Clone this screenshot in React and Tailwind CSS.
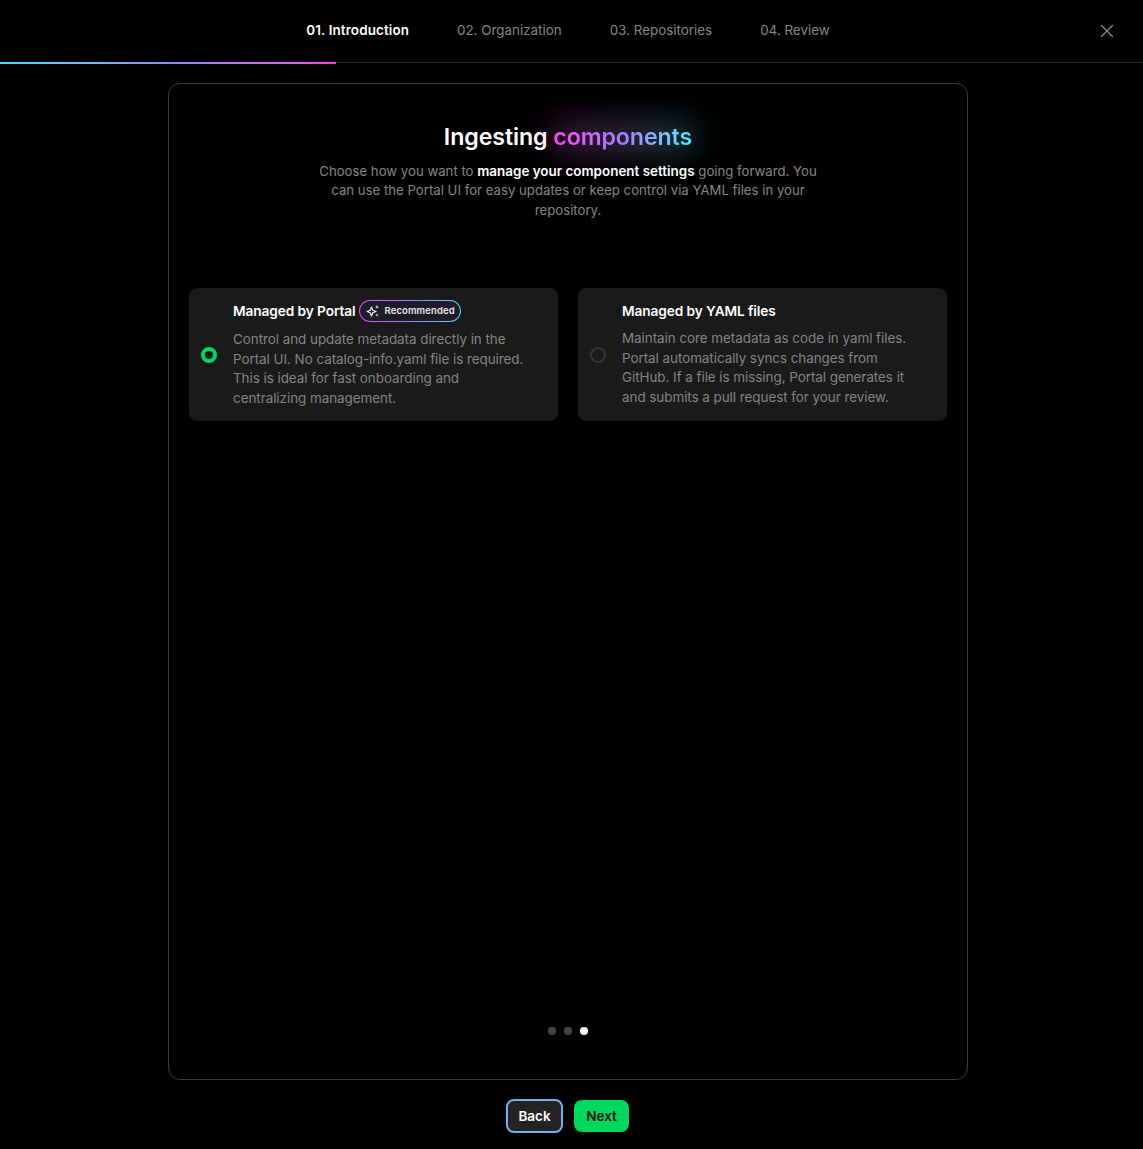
import { X } from 'lucide-react';

const FONT = "font-['Inter',sans-serif]";

const STEPS = ['01. Introduction', '02. Organization', '03. Repositories', '04. Review'];

function SparkIcon() {
  return (
    <svg width="14" height="14" viewBox="0 0 14 14" className="shrink-0">
      <path d="M5.5 3 L6.7 6.3 L10 7.5 L6.7 8.7 L5.5 12 L4.3 8.7 L1 7.5 L4.3 6.3 Z" fill="none" stroke="#f0f0f0" strokeWidth="1.2" strokeLinejoin="round" />
      <path d="M11 1 L11.6 2.4 L13 3 L11.6 3.6 L11 5 L10.4 3.6 L9 3 L10.4 2.4 Z" fill="#f0f0f0" />
      <path d="M11 9.5 L11.5 10.5 L12.5 11 L11.5 11.5 L11 12.5 L10.5 11.5 L9.5 11 L10.5 10.5 Z" fill="#f0f0f0" />
    </svg>
  );
}

function Radio({ checked }) {
  if (checked) return <span className="block w-4 h-4 mt-px shrink-0 rounded-full border-[4px] border-[#00d75f]" />;
  return <span className="block w-4 h-4 mt-px shrink-0 rounded-full border-2 border-[#333333]" />;
}

function OptionCard({ checked, title, badge, lines }) {
  return (
    <div className="flex-1 h-[133px] bg-[#1a1a1a] rounded-lg flex items-center pl-3 pr-3">
      <Radio checked={checked} />
      <div className="ml-4 pb-px">
        <div className="flex items-center text-[13.7px] leading-5 font-semibold text-white tracking-[-0.1px]">
          {title}
          {badge && (
            <span className="ml-[3px] h-[22px] rounded-full p-px bg-gradient-to-r from-[#e43fe8] via-[#8a7cf0] to-[#3fd9f2]">
              <span className="h-full rounded-full bg-[#1f1b2a] flex items-center pl-[6px] pr-[5px] gap-[5px] text-[9.5px] font-semibold tracking-[0.1px] text-[#e8e8e8]">
                <SparkIcon />
                Recommended
              </span>
            </span>
          )}
        </div>
        <div className="mt-[8.5px] text-[13.45px] leading-[19.6px] text-[#858585] tracking-[-0.05px]">
          {lines.map(l => <div key={l} className="whitespace-nowrap">{l}</div>)}
        </div>
      </div>
    </div>
  );
}

export default function App() {
  return (
    <div className={`${FONT} w-full h-[1149px] bg-black flex flex-col`}>
      {/* top bar */}
      <div className="relative h-[63px] shrink-0 border-b border-[#2b2b2b] flex justify-center">
        <div className="flex gap-12 pt-[21px] ml-[-7px] text-[13.4px] leading-[18px] text-[#858585]">
          {STEPS.map((s, i) => (
            <span key={s} className={i === 0 ? 'font-semibold text-white tracking-[0.13px]' : ''}>{s}</span>
          ))}
        </div>
        <button className="absolute right-[25px] top-[20px] text-[#8c8c8c]">
          <X size={22} strokeWidth={1.5} />
        </button>
        <div className="absolute left-0 bottom-[-2px] h-[2px] w-[336px] bg-gradient-to-r from-[#3fe0f5] via-[#8a8cf5] to-[#f03fe8]" />
      </div>

      <div className="flex-1 flex flex-col items-center">
        {/* card */}
        <div className="mt-5 w-[800px] h-[997px] border border-[#3a3a3a] rounded-xl flex flex-col items-center ml-[-7px]">
          <h1 className="relative mt-[37px] text-[23.2px] leading-[32px] font-semibold text-white tracking-[-0.1px]">
            Ingesting{' '}
            <span className="relative inline-block">
              <span className="absolute inset-x-[-4px] inset-y-[2px] rounded-full opacity-30 blur-lg bg-gradient-to-r from-[#e43fe8] to-[#3fd9f2]" />
              <span className="relative bg-gradient-to-r from-[#ff3df0] via-[#a07cff] to-[#3fe8ff] bg-clip-text text-transparent">components</span>
            </span>
          </h1>
          <p className="mt-[8.7px] w-[510px] text-center text-[13.2px] leading-[19.6px] text-[#858585]">
            Choose how you want to <span className="text-[13.45px] font-semibold text-white">manage your component settings</span> going forward. You can use the Portal UI for easy updates or keep control via YAML files in your repository.
          </p>

          <div className="mt-[67.7px] w-full px-5 flex gap-5">
            <OptionCard
              checked
              badge
              title="Managed by Portal"
              lines={[
                'Control and update metadata directly in the',
                'Portal UI. No catalog-info.yaml file is required.',
                'This is ideal for fast onboarding and',
                'centralizing management.',
              ]}
            />
            <OptionCard
              title="Managed by YAML files"
              lines={[
                'Maintain core metadata as code in yaml files.',
                'Portal automatically syncs changes from',
                'GitHub. If a file is missing, Portal generates it',
                'and submits a pull request for your review.',
              ]}
            />
          </div>

          <div className="mt-auto mb-[44px] flex gap-2">
            <span className="w-2 h-2 rounded-full bg-[#444444]" />
            <span className="w-2 h-2 rounded-full bg-[#444444]" />
            <span className="w-2 h-2 rounded-full bg-white" />
          </div>
        </div>

        {/* footer */}
        <div className="mt-[19px] flex items-center gap-[11px] ml-[-8px]">
          <button className="h-[34px] w-[57px] rounded-lg bg-[#232323] border-2 border-[#78aef0] text-[13.5px] font-semibold text-white">Back</button>
          <button className="h-[32px] w-[55px] rounded-lg bg-[#00d75f] text-[13.5px] font-semibold text-[#04170c]">Next</button>
        </div>
      </div>
    </div>
  );
}
